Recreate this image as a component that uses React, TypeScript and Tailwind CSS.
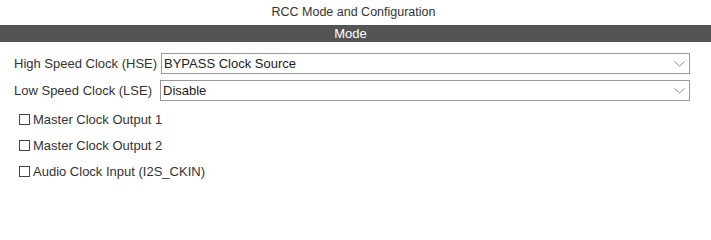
const rows = [
  { label: "High Speed Clock (HSE)", value: "BYPASS Clock Source", left: "ml-0" },
  { label: "Low Speed Clock (LSE)", value: "Disable", left: "-ml-px" },
];

const checks = ["Master Clock Output 1", "Master Clock Output 2", "Audio Clock Input (I2S_CKIN)"];

function Chevron() {
  return (
    <svg width="11" height="6" viewBox="0 0 11 6" className="shrink-0">
      <path d="M0.5 0.5 L5.5 5 L10.5 0.5" fill="none" stroke="#8a8a8a" strokeWidth="1" />
    </svg>
  );
}

export default function App() {
  return (
    <div className="h-[223px] w-[711px] bg-white font-['Liberation_Sans',Arial,sans-serif] text-[13px] text-[#333]">
      <div className="flex h-[25px] items-center justify-center pr-[4px] text-[12.5px] text-[#333]">
        RCC Mode and Configuration
      </div>
      <div className="flex h-[17px] items-center justify-center bg-[#535555] pr-[10px] text-[13px] text-white">
        Mode
      </div>

      <div className="flex flex-col gap-[6px] pt-[11px] pl-[14px] pr-[21px]">
        {rows.map((r) => (
          <div key={r.label} className="flex h-[21px] items-center">
            <span className="w-[147px] shrink-0 whitespace-nowrap">{r.label}</span>
            <div
              className={`flex h-[21px] flex-1 items-center justify-between border border-[#9a9a9a] pl-[2px] pr-[4px] text-[#222] ${r.left}`}
            >
              <span>{r.value}</span>
              <Chevron />
            </div>
          </div>
        ))}
      </div>

      <div className="flex flex-col gap-[11px] pt-[11px] pl-[19px]">
        {checks.map((c) => (
          <label key={c} className="flex h-[15px] items-center gap-[3px]">
            <span className="h-[11px] w-[11px] shrink-0 border border-[#444]" />
            <span>{c}</span>
          </label>
        ))}
      </div>
    </div>
  );
}
